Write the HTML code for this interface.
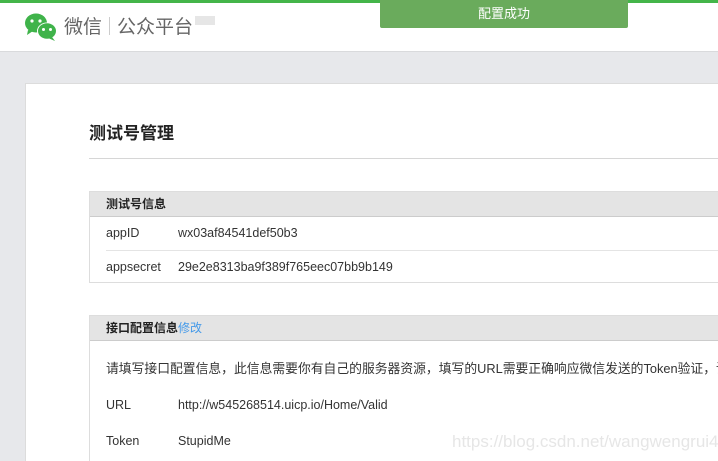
<!DOCTYPE html>
<html><head><meta charset="utf-8"><style>
*{margin:0;padding:0;box-sizing:border-box}
html,body{width:718px;height:461px;overflow:hidden}
body{background:#e7e8eb;font-family:"Liberation Sans","Noto Sans CJK SC",sans-serif;color:#222;position:relative}
.top{position:absolute;left:0;top:0;width:718px;height:52px;background:#fff;border-top:3px solid #44b549;border-bottom:1px solid #d9dadc}
.toast{position:absolute;left:380px;top:0;width:248px;height:28px;background:#6aab5c;color:#fff;font-size:13px;text-align:center;line-height:28px;border-radius:0 0 2px 2px}
.logo{position:absolute;left:24px;top:12px}
.brand{position:absolute;left:64px;top:14px;font-size:19px;color:#666;font-family:"Noto Sans CJK SC",sans-serif;line-height:24px}
.brand .sep{display:inline-block;width:1px;height:18px;background:#ccc;margin:0 7px;vertical-align:-2px}
.beta{display:inline-block;width:20px;height:9px;background:#e6e6e6;vertical-align:8px;margin-left:2px}
.card{position:absolute;left:25px;top:83px;width:693px;height:378px;background:#fff;border-left:1px solid #dcdcdc;border-top:1px solid #dcdcdc}
.title{position:absolute;left:89px;top:119px;font-size:17px;font-weight:bold;color:#222}
.hr{position:absolute;left:89px;top:158px;width:629px;height:1px;background:#d6d6d6}
.box{position:absolute;left:89px;width:629px;border:1px solid #ddd;border-right:none;background:#fff;overflow:hidden}
.bh{height:25px;background:#e4e4e4;border-bottom:1px solid #ccc;font-size:12px;font-weight:bold;line-height:25px;padding-left:16px;color:#222}
.bh a{color:#459ae9;font-weight:normal}
.row{position:relative;height:33px;margin:0 0 0 16px;font-size:12.5px;line-height:33px;color:#333}
.row+.row{border-top:1px solid #e4e4e4}
.row .v{position:absolute;left:72px;top:0}
.t{font-size:12.5px;color:#333;position:absolute;left:16px;white-space:nowrap}
.wm{position:absolute;left:452px;top:432px;font-size:17px;color:#e6e6e6;white-space:nowrap}
</style></head><body>
<div class="top"></div>
<div class="toast">配置成功</div>
<svg class="logo" width="34" height="30" viewBox="0 0 34 30">
<ellipse cx="12" cy="11" rx="11" ry="9.5" fill="#3fb34a"/>
<path d="M4 18 L3 23 L9 19Z" fill="#3fb34a"/>
<circle cx="8" cy="9" r="1.6" fill="#fff"/><circle cx="16" cy="9" r="1.6" fill="#fff"/>
<ellipse cx="23" cy="19" rx="10" ry="8.5" fill="#fff"/>
<ellipse cx="23" cy="19" rx="9" ry="7.7" fill="#3fb34a"/>
<path d="M28 25 L31 29 L24 26Z" fill="#3fb34a"/>
<circle cx="19.5" cy="17.5" r="1.5" fill="#fff"/><circle cx="26.5" cy="17.5" r="1.5" fill="#fff"/>
</svg>
<div class="brand">微信<span class="sep"></span>公众平台<span class="beta"></span></div>
<div class="card"></div>
<div class="title">测试号管理</div>
<div class="hr"></div>
<div class="box" style="top:191px;height:92px">
<div class="bh">测试号信息</div>
<div class="row">appID<span class="v">wx03af84541def50b3</span></div>
<div class="row">appsecret<span class="v">29e2e8313ba9f389f765eec07bb9b149</span></div>
</div>
<div class="box" style="top:315px;height:146px;border-bottom:none">
<div class="bh">接口配置信息<a>修改</a></div>
<div class="t" style="top:42px;font-size:12.8px">请填写接口配置信息，此信息需要你有自己的服务器资源，填写的URL需要正确响应微信发送的Token验证，请阅读<span style="color:#459ae9">消息接口使用指南</span></div>
<div class="t" style="top:82px">URL</div><div class="t" style="top:82px;left:88px">http://w545268514.uicp.io/Home/Valid</div>
<div class="t" style="top:118px">Token</div><div class="t" style="top:118px;left:88px">StupidMe</div>
</div>
<div class="wm">https://blog.csdn.net/wangwengrui40</div>
</body></html>
